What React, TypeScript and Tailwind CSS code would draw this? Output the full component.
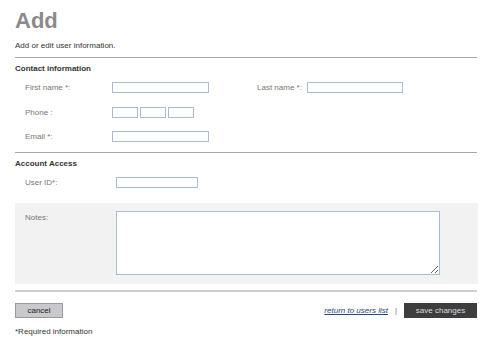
export default function App() {
  return (
    <div className="w-[492px] h-[347px] bg-white px-[15px] pt-[8px] text-[8px] text-[#333] [font-family:'Liberation_Sans',Arial,sans-serif]">
      <h1 className="h-[26px] text-[22px] leading-[26px] font-bold text-[#8a8a8a]">Add</h1>
      <p className="mt-[6px] h-[12px] leading-[12px] text-[#333]">Add or edit user information.</p>
      <div className="mt-[5px] h-px bg-[#a8a8a8]" />

      <h2 className="mt-[5px] h-[12px] leading-[12px] font-bold text-[#333]">Contact information</h2>
      <div className="mt-[7px] flex h-[11px] items-center pl-[10px]">
        <label className="w-[87px] text-[#777]">First name *:</label>
        <input className="h-[11px] w-[97px] border border-[#a8bcd4] bg-white" />
        <label className="ml-[48px] w-[50px] text-[#777]">Last name *:</label>
        <input className="h-[11px] w-[96px] border border-[#a8bcd4] bg-white" />
      </div>
      <div className="mt-[14px] flex h-[11px] items-center pl-[10px]">
        <label className="w-[87px] text-[#777]">Phone :</label>
        <div className="flex gap-[2px]">
          <input className="h-[11px] w-[26px] border border-[#a8bcd4] bg-white" />
          <input className="h-[11px] w-[26px] border border-[#a8bcd4] bg-white" />
          <input className="h-[11px] w-[26px] border border-[#a8bcd4] bg-white" />
        </div>
      </div>
      <div className="mt-[13px] flex h-[11px] items-center pl-[10px]">
        <label className="w-[87px] text-[#777]">Email *:</label>
        <input className="h-[11px] w-[97px] border border-[#a8bcd4] bg-white" />
      </div>
      <div className="mt-[10px] h-px bg-[#a8a8a8]" />

      <h2 className="mt-[5px] h-[12px] leading-[12px] font-bold text-[#333]">Account Access</h2>
      <div className="mt-[7px] flex h-[11px] items-center pl-[10px]">
        <label className="w-[91px] text-[#777]">User ID*:</label>
        <input className="h-[11px] w-[82px] border border-[#a8bcd4] bg-white" />
      </div>

      <div className="mt-[15px] flex h-[81px] w-[463px] bg-[#f2f2f2] pl-[10px] pt-[8px]">
        <label className="w-[91px] pt-[1px] leading-[12px] text-[#777]">Notes:</label>
        <textarea className="h-[64px] w-[324px] border border-[#a8bcd4] bg-white" />
      </div>
      <div className="mt-[6px] h-[2px] bg-[#cfcfcf]" />

      <div className="mt-[11px] flex h-[15px] items-center">
        <button className="h-[15px] w-[48px] border border-[#9a9a9a] bg-[#c9c9cd] text-[8px] leading-[13px] text-[#222]">cancel</button>
        <a href="#" className="ml-auto italic text-[#27457a] underline">return to users list</a>
        <span className="mx-[7px] text-[#777]">|</span>
        <button className="h-[15px] w-[73px] bg-[#3d3d3d] text-[8px] leading-[15px] text-[#dcdcdc]">save changes</button>
      </div>
      <p className="mt-[8px] h-[12px] leading-[12px] text-[#333]">*Required information</p>
    </div>
  );
}
